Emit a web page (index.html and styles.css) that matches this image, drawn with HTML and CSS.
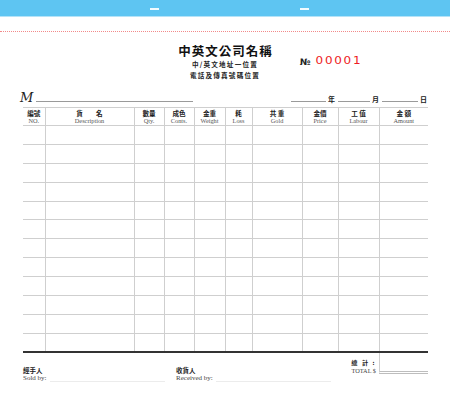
FILE: index.html
```html
<!DOCTYPE html>
<html lang="zh-Hant">
<head>
<meta charset="utf-8">
<title>Invoice</title>
<link rel="stylesheet" href="styles.css">
</head>
<body>
<div class="topbar"><span class="dash d1"></span><span class="dash d2"></span></div>
<div class="perf"></div>
<header class="head">
  <div class="company">
    <div class="title">中英文公司名稱</div>
    <div class="addr">中/英文地址一位置</div>
    <div class="addr tel">電話及傳真號碼位置</div>
  </div>
  <div class="serial"><span class="no">№</span><span class="num">00001</span></div>
</header>
<div class="meta">
  <span class="m">M</span><span class="line cust"></span>
  <div class="date">
    <span class="line dl1"></span><span class="zh dt">年</span>
    <span class="line dl2"></span><span class="zh dt">月</span>
    <span class="line dl3"></span><span class="zh dt">日</span>
  </div>
</div>
<table class="grid">
  <colgroup>
    <col style="width:22px"><col style="width:89px"><col style="width:30px"><col style="width:30px"><col style="width:31px"><col style="width:27px"><col style="width:50px"><col style="width:36px"><col style="width:41px"><col style="width:49px">
  </colgroup>
  <thead>
    <tr>
      <th><span class="zh">編號</span><span class="en">NO.</span></th>
      <th><span class="zh wide">貨　　名</span><span class="en">Description</span></th>
      <th><span class="zh">數量</span><span class="en">Qty.</span></th>
      <th><span class="zh">成色</span><span class="en">Conts.</span></th>
      <th><span class="zh">金重</span><span class="en">Weight</span></th>
      <th><span class="zh">耗</span><span class="en">Loss</span></th>
      <th><span class="zh">共 重</span><span class="en">Gold</span></th>
      <th><span class="zh">金價</span><span class="en">Price</span></th>
      <th><span class="zh">工 值</span><span class="en">Labour</span></th>
      <th><span class="zh">金 額</span><span class="en">Amount</span></th>
    </tr>
  </thead>
  <tbody>
    <tr><td></td><td></td><td></td><td></td><td></td><td></td><td></td><td></td><td></td><td></td></tr>
    <tr><td></td><td></td><td></td><td></td><td></td><td></td><td></td><td></td><td></td><td></td></tr>
    <tr><td></td><td></td><td></td><td></td><td></td><td></td><td></td><td></td><td></td><td></td></tr>
    <tr><td></td><td></td><td></td><td></td><td></td><td></td><td></td><td></td><td></td><td></td></tr>
    <tr><td></td><td></td><td></td><td></td><td></td><td></td><td></td><td></td><td></td><td></td></tr>
    <tr><td></td><td></td><td></td><td></td><td></td><td></td><td></td><td></td><td></td><td></td></tr>
    <tr><td></td><td></td><td></td><td></td><td></td><td></td><td></td><td></td><td></td><td></td></tr>
    <tr><td></td><td></td><td></td><td></td><td></td><td></td><td></td><td></td><td></td><td></td></tr>
    <tr><td></td><td></td><td></td><td></td><td></td><td></td><td></td><td></td><td></td><td></td></tr>
    <tr><td></td><td></td><td></td><td></td><td></td><td></td><td></td><td></td><td></td><td></td></tr>
    <tr><td></td><td></td><td></td><td></td><td></td><td></td><td></td><td></td><td></td><td></td></tr>
    <tr class="last"><td></td><td></td><td></td><td></td><td></td><td></td><td></td><td></td><td></td><td></td></tr>
  </tbody>
</table>
<footer class="foot">
  <div class="sign sold">
    <span class="zh">經手人</span>
    <div class="sline"><span class="en">Sold by:</span><span class="sl"></span></div>
  </div>
  <div class="sign recv">
    <span class="zh">收貨人</span>
    <div class="sline"><span class="en">Received by:</span><span class="sl"></span></div>
  </div>
  <div class="total">
    <div class="tlabel"><span class="zh">總 計 :</span><span class="en">TOTAL $</span></div>
    <div class="tbox"></div>
  </div>
</footer>
</body>
</html>
```
FILE: styles.css
```css
html, body {
  margin: 0;
  padding: 0;
}
body {
  width: 450px;
  height: 398px;
  overflow: hidden;
  background: #fff;
  color: #222;
  font-family: "Liberation Serif", "Noto Sans CJK TC", serif;
}
.zh {
  font-family: "Noto Sans CJK TC", "Noto Sans CJK SC", sans-serif;
  font-weight: 700;
}
.topbar {
  height: 16px;
  background: #5ec5f2;
  border-bottom: 1px solid #b4e3f8;
  display: grid;
  grid-template-columns: 150px 150px 150px;
}
.dash {
  display: block;
  width: 9px;
  height: 2px;
  margin-top: 8px;
  background: #f2fbff;
}
.d1 { grid-column: 2; }
.d2 { grid-column: 3; }
.perf {
  margin-top: 14px;
  border-top: 1px dotted #f28a8a;
}
.head {
  display: grid;
  grid-template-columns: 1fr auto 1fr;
  margin-top: 11px;
}
.company {
  grid-column: 2;
  text-align: center;
}
.title {
  font-family: "Noto Sans CJK TC", sans-serif;
  font-weight: 700;
  font-size: 12.5px;
  line-height: 16px;
  letter-spacing: 1px;
  color: #111;
  padding-left: 1px;
}
.addr {
  font-family: "Noto Sans CJK TC", sans-serif;
  font-weight: 700;
  font-size: 6.6px;
  line-height: 11px;
  letter-spacing: 1.2px;
  color: #222;
}
.serial {
  grid-column: 3;
  padding-left: 27px;
  padding-top: 11px;
  display: flex;
  align-items: baseline;
  gap: 5px;
}
.no {
  font-family: "DejaVu Sans", sans-serif;
  font-weight: 700;
  font-size: 9px;
  color: #222;
}
.num {
  font-family: "DejaVu Sans", sans-serif;
  font-size: 12px;
  letter-spacing: 1.7px;
  color: #ee1c24;
  transform: scaleY(0.8);
  display: inline-block;
}
.meta {
  display: flex;
  align-items: flex-end;
  height: 18px;
  margin-top: 7px;
  padding-left: 20px;
  padding-right: 20px;
}
.m {
  font-family: "DejaVu Serif", serif;
  font-style: italic;
  font-size: 13px;
  line-height: 14px;
  width: 16px;
  margin-bottom: 1px;
  color: #222;
}
.line {
  display: block;
  border-bottom: 1px solid #9a9a9a;
  margin-bottom: 4px;
}
.cust { width: 157px; }
.date {
  margin-left: auto;
  display: flex;
  align-items: flex-end;
}
.dt {
  font-size: 7px;
  line-height: 10px;
  margin-bottom: 2px;
  padding: 0 3px 0 2px;
}
.dl1 { width: 35px; }
.dl2 { width: 32px; }
.dl3 { width: 36px; }
.grid {
  margin-top: 1px;
  margin-left: 23px;
  width: 405px;
  table-layout: fixed;
  border-collapse: collapse;
}
.grid th, .grid td {
  border-top: 1px solid #cfcfcf;
  border-bottom: 1px solid #cfcfcf;
  border-left: 1px solid #cfcfcf;
  padding: 0;
}
.grid th:first-child, .grid td:first-child {
  border-left: none;
}
.grid thead tr {
  height: 18px;
}
.grid th {
  font-weight: normal;
  text-align: center;
  vertical-align: middle;
}
.grid th .zh {
  display: block;
  font-size: 6.6px;
  line-height: 7px;
  color: #222;
}
.grid th .wide {
  letter-spacing: 0;
}
.grid th .en {
  display: block;
  font-size: 6.3px;
  line-height: 7px;
  color: #555;
}
.grid tbody tr {
  height: 18.9px;
}
.grid tr.last td {
  border-bottom: 2px solid #333;
}
.foot {
  display: flex;
  margin-left: 23px;
  width: 405px;
}
.sign {
  padding-top: 13px;
  display: flex;
  flex-direction: column;
}
.sign .zh {
  font-size: 6.5px;
  line-height: 8px;
  color: #222;
}
.sline {
  display: flex;
  align-items: flex-end;
}
.sign .en {
  font-size: 7px;
  line-height: 8px;
  color: #444;
  padding-right: 3px;
  white-space: nowrap;
  flex-shrink: 0;
}
.sl {
  display: block;
  flex-shrink: 0;
  border-bottom: 1px solid #ececec;
  margin-bottom: 0;
}
.sold { width: 153px; }
.sold .sl { width: 115px; }
.recv { width: 160px; flex-shrink: 0; }
.recv .sl { width: 115px; }
.total {
  margin-left: auto;
  display: flex;
}
.tlabel {
  display: flex;
  flex-direction: column;
  align-items: flex-end;
  padding-top: 6px;
  padding-right: 3px;
}
.tlabel .zh {
  font-size: 6.2px;
  line-height: 8px;
  letter-spacing: 1.5px;
}
.tlabel .en {
  font-size: 6.3px;
  line-height: 7px;
  color: #444;
  white-space: nowrap;
}
.tbox {
  width: 48px;
  height: 18px;
  border-left: 1px solid #cfcfcf;
  border-bottom: 3px double #bdbdbd;
}
```
